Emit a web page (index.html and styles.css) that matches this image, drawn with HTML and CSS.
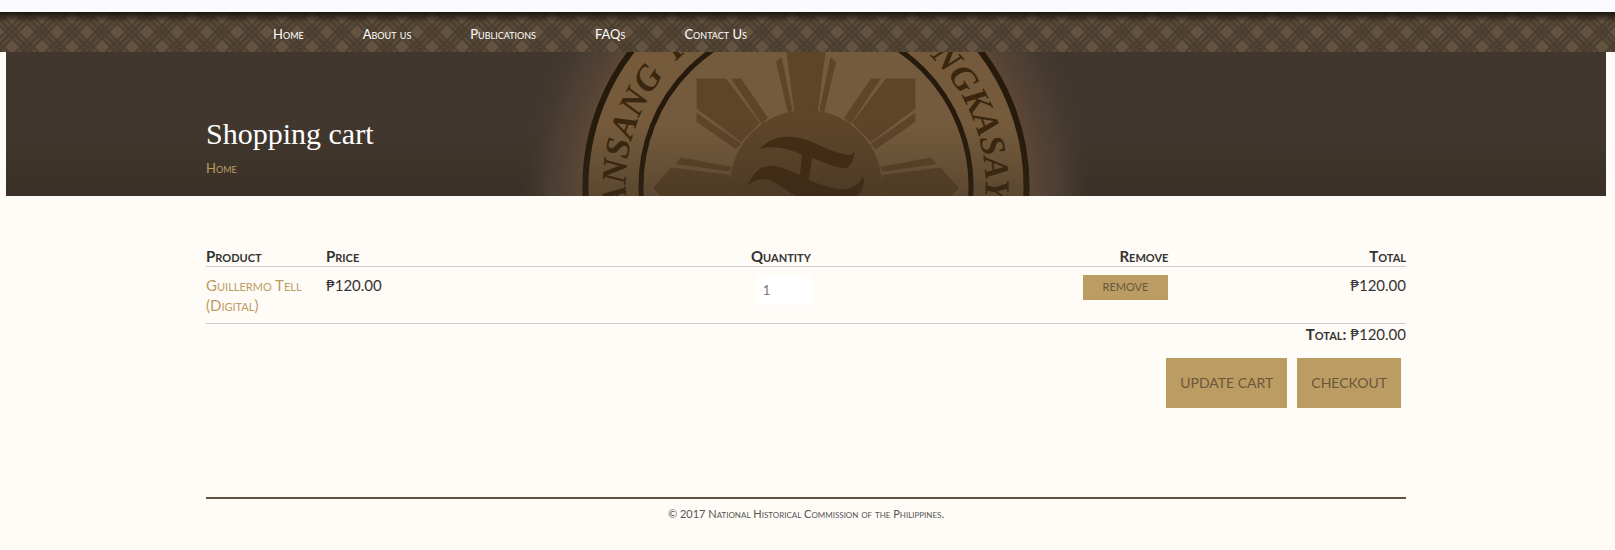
FILE: index.html
```html
<!DOCTYPE html>
<html lang="en">
<head>
<meta charset="utf-8">
<title>Shopping cart</title>
<link rel="stylesheet" href="styles.css">
</head>
<body>
<header class="topbar">
  <svg class="topbar-weave" aria-hidden="true">
    <defs>
      <pattern id="weave" width="21.213" height="21.213" patternUnits="userSpaceOnUse" patternTransform="translate(12 5) rotate(45)">
        <rect width="21.213" height="21.213" fill="#4b3e2f"/>
        <g fill="#655342">
          <path d="M0 0h5v5h-5zM16.2 0h5.1v5h-5.1zM0 16.2h5v5.1h-5zM16.2 16.2h5.1v5.1h-5.1z"/>
          <path fill="#5d4e3d" d="M7.2 0h2v5h-2zM12 0h2v5h-2zM7.2 16.2h2v5.1h-2zM12 16.2h2v5.1h-2zM0 7.2h5v2h-5zM0 12h5v2h-5zM16.2 7.2h5.1v2h-5.1zM16.2 12h5.1v2h-5.1z"/>
          <path fill="#5b4c3b" d="M7.2 7.2h2v2h-2zM12 7.2h2v2h-2zM7.2 12h2v2h-2zM12 12h2v2h-2z"/>
        </g>
      </pattern>
    </defs>
    <rect width="100%" height="100%" fill="url(#weave)"/>
  </svg>
  <nav class="menu" aria-label="Main">
    <a href="#">Home</a>
    <a href="#">About us</a>
    <a href="#">Publications</a>
    <a href="#">FAQs</a>
    <a href="#">Contact Us</a>
  </nav>
</header>

<div class="page">
  <section class="banner">
    <svg class="seal" viewBox="506 52 600 144" aria-hidden="true">
      <defs>
        <radialGradient id="glow" gradientUnits="userSpaceOnUse" cx="806" cy="186" r="286">
          <stop offset=".77" stop-color="#5f4736"/>
          <stop offset=".83" stop-color="#534234"/>
          <stop offset=".9" stop-color="#493d32"/>
          <stop offset="1" stop-color="#42372e" stop-opacity="0"/>
        </radialGradient>
        <linearGradient id="shade" gradientUnits="userSpaceOnUse" x1="0" y1="52" x2="0" y2="196">
          <stop offset=".5" stop-color="#352a1d" stop-opacity="0"/>
          <stop offset="1" stop-color="#352a1d" stop-opacity=".4"/>
        </linearGradient>
        <path id="arcLeft" d="M627 208A180 180 0 0 1 806 6"/>
        <path id="arcRight" d="M806 6A180 180 0 0 1 985 200"/>
        <g id="halfSun">
          <path d="M786.500 52L794 110L780 190H806V52z"/>
          <path d="M776 62L781.500 57L792.500 110L788 113z"/>
          <path d="M696.500 78.500H726L760 123L741 142L696.500 108.500z"/>
          <path d="M731 78.500H741L768 118L761.500 124z"/>
          <path d="M696.500 112.500V122L736 149L741.500 144z"/>
          <path d="M653 188L671.500 167.500L730 175V196H661z"/>
          <path d="M681 157.500L675.500 164L729 171.500L732 167z"/>
        </g>
      </defs>
      <rect x="506" y="52" width="600" height="144" fill="url(#glow)"/>
      <circle cx="806" cy="186" r="220.500" fill="#755b3c" stroke="#251a0b" stroke-width="6"/>
      <circle cx="806" cy="186" r="165" fill="#755b3d" stroke="#251a0b" stroke-width="5"/>
      <g fill="#5e452a">
        <use href="#halfSun"/>
        <use href="#halfSun" transform="translate(1612 0) scale(-1 1)"/>
        <circle cx="806" cy="186" r="76"/>
      </g>
      <path fill="#452c14" d="M760 149C769 139 779 136 794 137C812 139 828 152 848 155C851 155 852 154 855 152C853 161 850 168 845 168C834 168 822 161 812 158L809 180C823 186 836 190 848 189C856 187 860 182 863 176C865 184 863 190 857 197H797C784 189 772 178 762 179C756 179 753 182 748 185C754 172 760 166 771 166C783 166 790 172 800 175L802 155C788 148 775 145 760 149z"/>
      <g class="seal-text">
        <text><textPath href="#arcLeft">ANSANG&#160; P</textPath></text>
        <text text-anchor="end"><textPath href="#arcRight" startOffset="100%">NGKASAY</textPath></text>
      </g>
      <circle cx="806" cy="186" r="223" fill="url(#shade)"/>
    </svg>
    <div class="container banner-copy">
      <h1>Shopping cart</h1>
      <a class="crumb" href="#">Home</a>
    </div>
  </section>

  <main class="container">
    <form class="cart" onsubmit="return false">
      <table class="cart-table">
        <colgroup><col class="c-product"><col class="c-price"><col class="c-qty"><col class="c-remove"><col class="c-total"></colgroup>
        <thead>
          <tr><th scope="col">Product</th><th scope="col">Price</th><th scope="col" class="end">Quantity</th><th scope="col" class="end">Remove</th><th scope="col" class="end">Total</th></tr>
        </thead>
        <tbody>
          <tr>
            <td><a href="#">Guillermo Tell (Digital)</a></td>
            <td>₱120.00</td>
            <td class="end"><input class="qty" type="text" value="1" aria-label="Quantity"></td>
            <td class="end"><button class="btn btn-small" type="button">Remove</button></td>
            <td class="end">₱120.00</td>
          </tr>
        </tbody>
      </table>
      <p class="sum"><strong>Total:</strong> ₱120.00</p>
      <div class="actions">
        <button class="btn" type="button">Update cart</button>
        <button class="btn" type="button">Checkout</button>
      </div>
    </form>
  </main>

  <footer class="container footer">© 2017 National Historical Commission of the Philippines.</footer>
</div>
</body>
</html>
```
FILE: styles.css
```css
* { box-sizing: border-box; }

body {
  margin: 0;
  background: #fffbf6;
  border-top: 12px solid #fbfaff;
  color: #333;
  font-family: Lato, "Open Sans", sans-serif;
  font-size: 15px;
  line-height: 20px;
}

a { color: #bb9d64; text-decoration: none; }

.topbar { position: relative; background: #4b3e2f; }
.topbar::after {
  content: "";
  position: absolute;
  inset: 0 0 auto;
  height: 10px;
  background: linear-gradient(#1c150f, rgba(28, 21, 15, 0));
}
.topbar-weave { position: absolute; inset: 0; width: 100%; height: 100%; }

.menu {
  position: relative;
  display: flex;
  gap: 59px;
  padding: 12px 0 8px 273px;
  font-size: 13px;
  font-variant: small-caps;
}
.menu a { color: #fff; }

.page { padding: 0 9px 0 6px; }
.container { width: 100%; max-width: 1200px; margin: 0 auto; }

.banner {
  position: relative;
  overflow: hidden;
  background: linear-gradient(#42372e 55%, #3d342a 75%, #3b3027);
}
.seal {
  position: absolute;
  top: 0;
  left: 50%;
  width: 600px;
  height: 100%;
  transform: translateX(-50%);
}
.seal-text {
  fill: #3a260e;
  font: italic bold 35px "Liberation Serif", serif;
}
.banner-copy { position: relative; padding: 64px 0 18px; }
h1 {
  margin: 0;
  color: #fff;
  font: 400 30px/36px "Liberation Serif", serif;
}
.crumb {
  display: block;
  padding-top: 6px;
  font-size: 13px;
  font-variant: small-caps;
}

.cart { padding-top: 50px; }
.cart-table {
  width: 100%;
  table-layout: fixed;
  border-collapse: collapse;
}
.c-product { width: 10%; }
.c-price { width: 20%; }
.c-qty { width: 20.4%; }
.c-remove { width: 29.8%; }
.c-total { width: 19.8%; }
.cart-table th {
  padding: 0;
  border-bottom: 1px solid #ccc;
  text-align: left;
  font-variant: small-caps;
}
.cart-table td {
  padding: 8px 10px 8px 0;
  border-bottom: 1px solid #ccc;
  vertical-align: top;
  font-variant: small-caps;
}
.cart-table .end { padding-right: 0; text-align: right; }

.qty {
  display: inline-block;
  width: 54px;
  height: 30px;
  padding: 0 6px;
  border: 0;
  background: #fff;
  color: #777;
  font: 13px Lato, sans-serif;
  vertical-align: top;
}

.btn {
  padding: 15px 14px;
  border: 0;
  background: #bb9d64;
  color: #6a563a;
  font: 14px/20px Lato, sans-serif;
  text-transform: uppercase;
}
.btn-small { padding: 2px 20px 3px; font-size: 11px; vertical-align: top; }

.sum { margin: 0; text-align: right; }
.sum strong { font-variant: small-caps; }

.actions {
  display: flex;
  justify-content: flex-end;
  gap: 10px;
  padding: 14px 5px 0 0;
}

.footer {
  margin-top: 89px;
  padding: 5px 0 26px;
  border-top: 2px solid #625440;
  color: #555;
  font-size: 11px;
  font-variant: small-caps;
  text-align: center;
}
```
